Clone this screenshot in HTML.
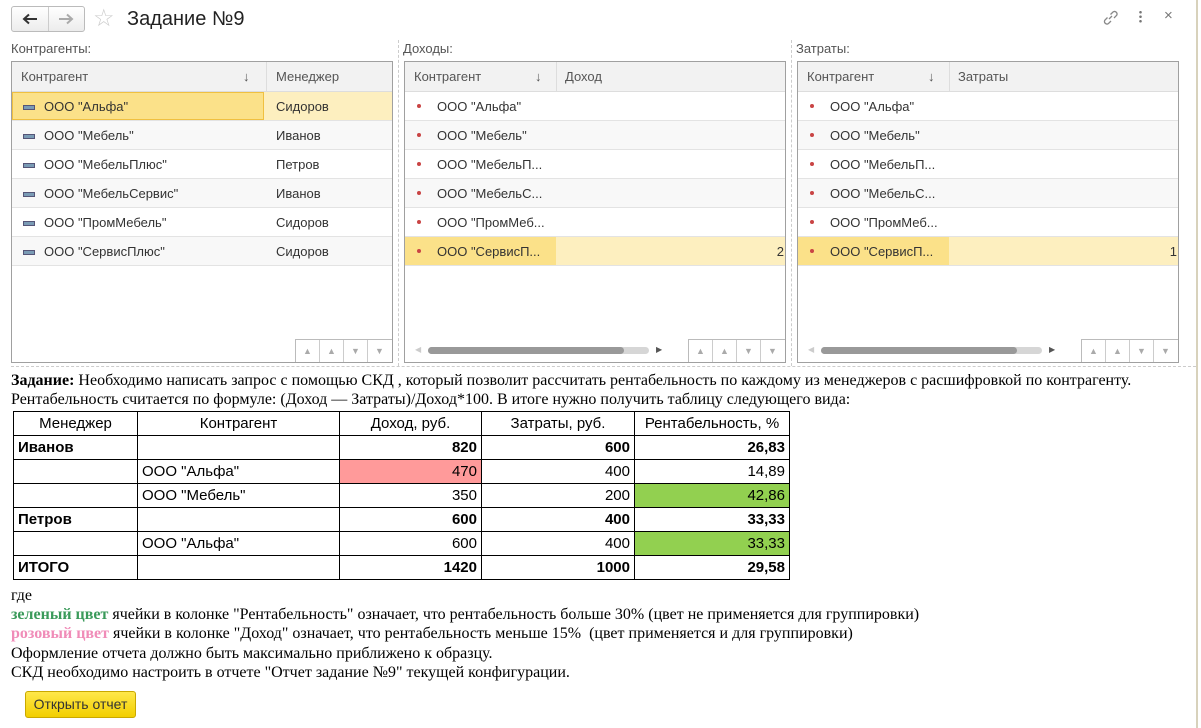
<!DOCTYPE html>
<html><head><meta charset="utf-8"><style>
body{margin:0;width:1201px;height:728px;position:relative;background:#fff;font-family:"Liberation Sans",Arial,sans-serif;overflow:hidden;color:#333}
.a{position:absolute}
.nav{left:11px;top:6px;width:72px;height:24px;border:1px solid #bbb;border-radius:3px;background:linear-gradient(#fff,#ececec)}
.lbl{font-size:13px;color:#555}
.panel{border:1px solid #a0a0a0;background:#fff;overflow:hidden}
.hd{position:absolute;left:0;top:0;right:0;height:29px;background:#f2f2f2;border-bottom:1px solid #ddd;font-size:13px;color:#555}
.hd div{position:absolute;top:7px}
.row{position:absolute;left:0;right:0;height:28px;border-bottom:1px solid #e3e3e3;font-size:13px;color:#333}
.row div{position:absolute;top:7px;white-space:nowrap}
.sel1{background:#fdefbf}
.dot{position:absolute;left:12px;top:12px;width:4px;height:4px;border-radius:50%;background:#c94444}
.dash{position:absolute;left:11px;top:13px;width:10px;height:3px;background:#7a9bb5;border:1px solid #557}
.btns{position:absolute;right:0;bottom:0;height:22px;width:96px;border-top:1px solid #bbb;border-left:1px solid #bbb}
.btns i{position:absolute;top:0;width:23px;height:22px;border-right:1px solid #ccc;color:#aaa;font-size:9px;text-align:center;line-height:22px;font-style:normal}
.vd{position:absolute;top:40px;height:326px;border-left:1px dashed #ccc}
table.t{position:absolute;left:13px;top:411px;border-collapse:collapse;font-family:"Liberation Sans",Calibri,sans-serif;font-size:15px;color:#000}
table.t td{border:1px solid #000;height:23px;padding:0 4px;line-height:23px}
.r{text-align:right}.b{font-weight:bold}.c{text-align:center}
.tx{font-family:"Liberation Serif","Times New Roman",serif;font-size:16px;color:#000;white-space:nowrap}
</style></head><body>
<div class="a nav">
<svg class="a" style="left:10px;top:6px" width="16" height="12" viewBox="0 0 16 12"><path d="M15 6H3 M7 1.5L2 6L7 10.5" stroke="#333" stroke-width="2" fill="none"/></svg>
<div class="a" style="left:36px;top:0;height:24px;border-left:1px solid #ccc"></div>
<svg class="a" style="left:46px;top:6px" width="16" height="12" viewBox="0 0 16 12"><path d="M1 6H13 M9 1.5L14 6L9 10.5" stroke="#aaa" stroke-width="2" fill="none"/></svg>
</div>
<div class="a" style="left:93px;top:4px;font-size:24px;color:#ccc">☆</div>
<div class="a" style="left:127px;top:8px;font-size:20px;color:#222">Задание №9</div>
<svg class="a" style="left:1101px;top:9px" width="18" height="18" viewBox="0 0 18 18"><path d="M8 10 L11 7 M6.5 8.5 L4 11 a2.5 2.5 0 0 0 3.5 3.5 L10 12 M9.5 5.5 L12 3 a2.5 2.5 0 0 1 3.5 3.5 L13 9" stroke="#888" fill="none" stroke-width="1.3"/></svg>
<div class="a" style="left:1139px;top:10px;width:3px;height:14px;background:radial-gradient(circle,#777 1.2px,transparent 1.4px) 0 0/3px 4.5px"></div>
<div class="a" style="left:1164px;top:7px;font-size:15px;color:#777">×</div>
<div class="a" style="left:1196px;top:0;width:2px;height:728px;background:#d8d2bc"></div>

<div class="a lbl" style="left:11px;top:41px">Контрагенты:</div>
<div class="a lbl" style="left:403px;top:41px">Доходы:</div>
<div class="a lbl" style="left:796px;top:41px">Затраты:</div>
<div class="vd" style="left:398px"></div><div class="vd" style="left:791px"></div>
<div class="a" style="left:11px;top:366px;width:1185px;border-top:1px dashed #ccc"></div>

<div class="a panel" style="left:11px;top:61px;width:380px;height:300px">
<div class="hd"><div style="left:9px">Контрагент</div><div style="left:231px">↓</div><div style="left:254px;top:0;height:29px;border-left:1px solid #ddd"></div><div style="left:264px">Менеджер</div></div>
<div class="row sel1" style="top:30px"><div style="left:0;top:0;width:250px;height:26px;background:#fbe189;border:1px solid #f0c040"></div><span class="dash" style="top:13px"></span><div style="left:32px">ООО "Альфа"</div><div style="left:264px">Сидоров</div></div>
<div class="row" style="top:59px;background:#f8f8f8"><span class="dash"></span><div style="left:32px">ООО "Мебель"</div><div style="left:264px">Иванов</div></div>
<div class="row" style="top:88px"><span class="dash"></span><div style="left:32px">ООО "МебельПлюс"</div><div style="left:264px">Петров</div></div>
<div class="row" style="top:117px;background:#f8f8f8"><span class="dash"></span><div style="left:32px">ООО "МебельСервис"</div><div style="left:264px">Иванов</div></div>
<div class="row" style="top:146px"><span class="dash"></span><div style="left:32px">ООО "ПромМебель"</div><div style="left:264px">Сидоров</div></div>
<div class="row" style="top:175px;background:#f8f8f8"><span class="dash"></span><div style="left:32px">ООО "СервисПлюс"</div><div style="left:264px">Сидоров</div></div>
<div class="btns"><i style="left:0">▲</i><i style="left:24px">▲</i><i style="left:48px">▼</i><i style="left:72px;border:0">▼</i></div>
</div>

<div class="a panel" style="left:404px;top:61px;width:380px;height:300px">
<div class="hd"><div style="left:9px">Контрагент</div><div style="left:130px">↓</div><div style="left:151px;top:0;height:29px;border-left:1px solid #ddd"></div><div style="left:160px">Доход</div></div>
<div class="row" style="top:30px"><span class="dot"></span><div style="left:32px">ООО "Альфа"</div></div>
<div class="row" style="top:59px;background:#f8f8f8"><span class="dot"></span><div style="left:32px">ООО "Мебель"</div></div>
<div class="row" style="top:88px"><span class="dot"></span><div style="left:32px">ООО "МебельП...</div></div>
<div class="row" style="top:117px;background:#f8f8f8"><span class="dot"></span><div style="left:32px">ООО "МебельС...</div></div>
<div class="row" style="top:146px"><span class="dot"></span><div style="left:32px">ООО "ПромМеб...</div></div>
<div class="row sel1" style="top:175px"><div style="left:0;top:0;width:151px;height:28px;background:#fbe189"></div><span class="dot"></span><div style="left:32px">ООО "СервисП...</div><div style="right:1px">2</div></div>
<div class="a" style="left:23px;top:285px;width:221px;height:7px;border-radius:4px;background:#d6d6d6"><div style="width:196px;height:7px;border-radius:4px;background:#999"></div></div>
<div class="a" style="left:10px;top:283px;font-size:8px;color:#ccc">◀</div><div class="a" style="left:251px;top:283px;font-size:8px;color:#555">▶</div>
<div class="btns"><i style="left:0">▲</i><i style="left:24px">▲</i><i style="left:48px">▼</i><i style="left:72px;border:0">▼</i></div>
</div>

<div class="a panel" style="left:797px;top:61px;width:380px;height:300px">
<div class="hd"><div style="left:9px">Контрагент</div><div style="left:130px">↓</div><div style="left:151px;top:0;height:29px;border-left:1px solid #ddd"></div><div style="left:160px">Затраты</div></div>
<div class="row" style="top:30px"><span class="dot"></span><div style="left:32px">ООО "Альфа"</div></div>
<div class="row" style="top:59px;background:#f8f8f8"><span class="dot"></span><div style="left:32px">ООО "Мебель"</div></div>
<div class="row" style="top:88px"><span class="dot"></span><div style="left:32px">ООО "МебельП...</div></div>
<div class="row" style="top:117px;background:#f8f8f8"><span class="dot"></span><div style="left:32px">ООО "МебельС...</div></div>
<div class="row" style="top:146px"><span class="dot"></span><div style="left:32px">ООО "ПромМеб...</div></div>
<div class="row sel1" style="top:175px"><div style="left:0;top:0;width:151px;height:28px;background:#fbe189"></div><span class="dot"></span><div style="left:32px">ООО "СервисП...</div><div style="right:1px">1</div></div>
<div class="a" style="left:23px;top:285px;width:221px;height:7px;border-radius:4px;background:#d6d6d6"><div style="width:196px;height:7px;border-radius:4px;background:#999"></div></div>
<div class="a" style="left:10px;top:283px;font-size:8px;color:#ccc">◀</div><div class="a" style="left:251px;top:283px;font-size:8px;color:#555">▶</div>
<div class="btns"><i style="left:0">▲</i><i style="left:24px">▲</i><i style="left:48px">▼</i><i style="left:72px;border:0">▼</i></div>
</div>

<div class="a tx" style="left:11px;top:372px"><b>Задание:</b> Необходимо написать запрос с помощью СКД , который позволит рассчитать рентабельность по каждому из менеджеров с расшифровкой по контрагенту.</div>
<div class="a tx" style="left:11px;top:391px">Рентабельность считается по формуле: (Доход — Затраты)/Доход*100. В итоге нужно получить таблицу следующего вида:</div>

<table class="t">
<tr><td class="c" style="width:115px">Менеджер</td><td class="c" style="width:193px">Контрагент</td><td class="c" style="width:133px">Доход, руб.</td><td class="c" style="width:144px">Затраты, руб.</td><td class="c" style="width:146px">Рентабельность, %</td></tr>
<tr class="b"><td>Иванов</td><td></td><td class="r">820</td><td class="r">600</td><td class="r">26,83</td></tr>
<tr><td></td><td>ООО "Альфа"</td><td class="r" style="background:#ff9a9a">470</td><td class="r">400</td><td class="r">14,89</td></tr>
<tr><td></td><td>ООО "Мебель"</td><td class="r">350</td><td class="r">200</td><td class="r" style="background:#92d050">42,86</td></tr>
<tr class="b"><td>Петров</td><td></td><td class="r">600</td><td class="r">400</td><td class="r">33,33</td></tr>
<tr><td></td><td>ООО "Альфа"</td><td class="r">600</td><td class="r">400</td><td class="r" style="background:#92d050">33,33</td></tr>
<tr class="b"><td>ИТОГО</td><td></td><td class="r">1420</td><td class="r">1000</td><td class="r">29,58</td></tr>
</table>

<div class="a tx" style="left:11px;top:587px">где</div>
<div class="a tx" style="left:11px;top:606px"><b style="color:#3a9a5a">зеленый цвет</b> ячейки в колонке "Рентабельность" означает, что рентабельность больше 30% (цвет не применяется для группировки)</div>
<div class="a tx" style="left:11px;top:625px"><b style="color:#f08cb8">розовый цвет</b> ячейки в колонке "Доход" означает, что рентабельность меньше 15%&nbsp; (цвет применяется и для группировки)</div>
<div class="a tx" style="left:11px;top:645px">Оформление отчета должно быть максимально приближено к образцу.</div>
<div class="a tx" style="left:11px;top:664px">СКД необходимо настроить в отчете "Отчет задание №9" текущей конфигурации.</div>

<div class="a" style="left:25px;top:691px;width:109px;height:25px;border:1px solid #c9a800;border-radius:3px;background:linear-gradient(#ffe84a,#f2cf00);font-size:14px;color:#333;text-align:center;line-height:25px">Открыть отчет</div>
</body></html>
